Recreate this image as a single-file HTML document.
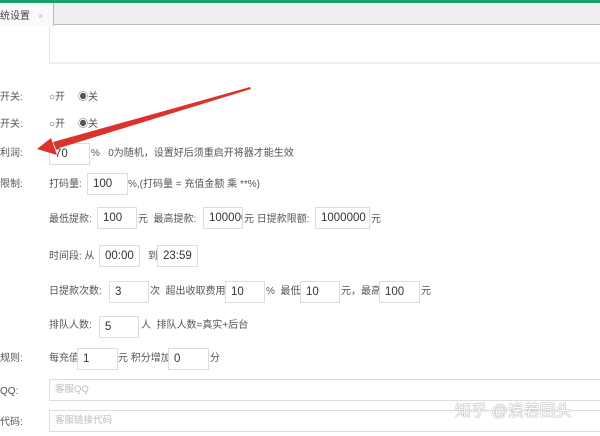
<!DOCTYPE html>
<html><head><meta charset="utf-8"><style>
body{margin:0;width:600px;height:436px;background:#fff;position:relative;overflow:hidden;font-family:"Liberation Sans","Noto Sans CJK SC",sans-serif;font-size:10px;color:#555}
.a{position:absolute;white-space:nowrap;line-height:14px;margin-top:1px}
.i{position:absolute;border:1px solid #ddd;background:#fff;box-sizing:border-box;height:22px;line-height:20px;padding-left:5px;font-size:11.5px;color:#333;overflow:hidden;white-space:nowrap}
.ph{color:#bbb;font-size:9.5px}
</style></head><body>
<div style="position:absolute;left:0;top:0;width:600px;height:3px;background:#1aa06a"></div>
<div style="position:absolute;left:0;top:3px;width:600px;height:22px;background:#efefef;border-bottom:1px solid #bbb;box-sizing:border-box"></div>
<div style="position:absolute;left:0;top:3px;width:54px;height:23px;background:#fafafa;border-right:1px solid #bbb;box-sizing:border-box"></div>
<div class="a" style="left:0;top:9px;color:#444">统设置</div>
<div class="a" style="left:38px;top:8px;color:#bbb;font-size:9px">×</div>
<div style="position:absolute;left:49px;top:26px;width:560px;height:36px;border-left:1px solid #e6e6e6;border-bottom:2px solid #eee"></div>

<div class="a" style="left:0;top:90px">开关:</div>
<div class="a" style="left:49px;top:90px">○开</div><div class="a" style="left:78px;top:90px">◉关</div>
<div class="a" style="left:0;top:117px">开关:</div>
<div class="a" style="left:49px;top:117px">○开</div><div class="a" style="left:78px;top:117px">◉关</div>

<div class="a" style="left:0;top:146px">利润:</div>
<div class="i" style="left:49px;top:143px;width:41px">70</div>
<div class="a" style="left:91px;top:146px">%&nbsp;&nbsp; 0为随机，设置好后须重启开将器才能生效</div>

<div class="a" style="left:0;top:177px">限制:</div>
<div class="a" style="left:49px;top:177px">打码量:</div>
<div class="i" style="left:87px;top:173px;width:41px">100</div>
<div class="a" style="left:128px;top:177px">%,(打码量 = 充值金额 乘 **%)</div>

<div class="a" style="left:49px;top:212px">最低提款:</div>
<div class="i" style="left:97px;top:207px;width:40px">100</div>
<div class="a" style="left:138px;top:212px">元 &nbsp;最高提款:</div>
<div class="i" style="left:203px;top:207px;width:40px">100000</div>
<div class="a" style="left:244px;top:212px">元 日提款限额:</div>
<div class="i" style="left:315px;top:207px;width:55px">1000000</div>
<div class="a" style="left:371px;top:212px">元</div>

<div class="a" style="left:49px;top:249px">时间段: 从</div>
<div class="i" style="left:99px;top:245px;width:41px">00:00</div>
<div class="a" style="left:148px;top:249px">到</div>
<div class="i" style="left:157px;top:245px;width:41px">23:59</div>

<div class="a" style="left:49px;top:284px">日提款次数:</div>
<div class="i" style="left:109px;top:281px;width:40px">3</div>
<div class="a" style="left:150px;top:284px">次 &nbsp;超出收取费用</div>
<div class="i" style="left:225px;top:281px;width:40px">10</div>
<div class="a" style="left:266px;top:284px">% &nbsp;最低</div>
<div class="i" style="left:300px;top:281px;width:40px">10</div>
<div class="a" style="left:341px;top:284px">元，最高</div>
<div class="i" style="left:379px;top:281px;width:41px">100</div>
<div class="a" style="left:421px;top:284px">元</div>

<div class="a" style="left:49px;top:318px">排队人数:</div>
<div class="i" style="left:99px;top:316px;width:40px">5</div>
<div class="a" style="left:141px;top:318px">人 &nbsp;排队人数=真实+后台</div>

<div class="a" style="left:0;top:351px">规则:</div>
<div class="a" style="left:49px;top:351px">每充值</div>
<div class="i" style="left:77px;top:348px;width:41px">1</div>
<div class="a" style="left:118px;top:351px">元 积分增加</div>
<div class="i" style="left:168px;top:348px;width:41px">0</div>
<div class="a" style="left:210px;top:351px">分</div>

<div class="a" style="left:0;top:384px">QQ:</div>
<div class="i ph" style="left:49px;top:379px;width:560px">客服QQ</div>
<div class="a" style="left:0;top:415px">代码:</div>
<div class="i ph" style="left:49px;top:410px;width:560px">客服链接代码</div>

<div class="a" style="left:455px;top:402px;font-size:16px;line-height:18px;color:#fff;text-shadow:0 0 1px #888,0 0 1px #888">知乎 @浪若回头</div>

<svg style="position:absolute;left:0;top:0" width="600" height="436">
<polygon points="250,87 251,89 56,149 53,142" fill="#d9332b"/>
<polygon points="37,149 51,138 57,155" fill="#d9332b"/>
</svg>
</body></html>
